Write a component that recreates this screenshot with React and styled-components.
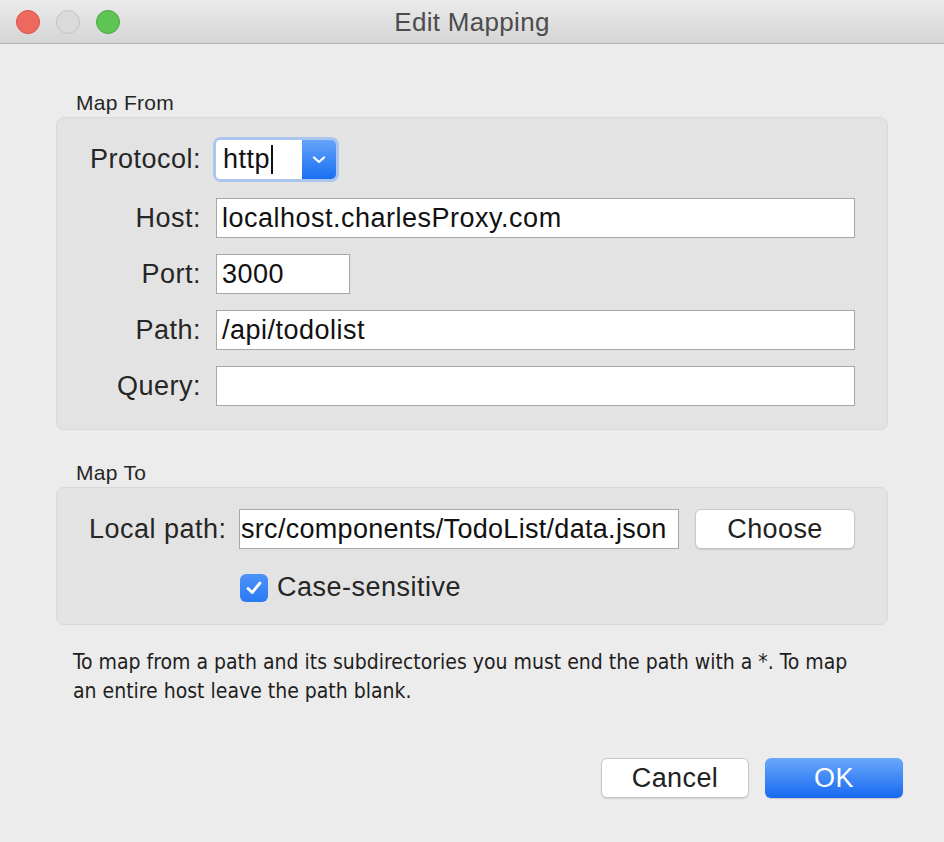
import React from "react";
import styled, { createGlobalStyle } from "styled-components";

const Global = createGlobalStyle`
  html, body { margin: 0; padding: 0; background: #ececec; }
  body { font-family: "Liberation Sans", Arial, sans-serif; color: #1e1e1e; }
  * { box-sizing: border-box; }
`;

const Window = styled.div`
  width: 944px;
  height: 842px;
  background: #ececec;
  display: flex;
  flex-direction: column;
  overflow: hidden;
`;

const TitleBar = styled.div`
  height: 44px;
  flex: none;
  display: grid;
  grid-template-columns: 1fr auto 1fr;
  align-items: center;
  background: linear-gradient(#ebebeb, #d5d5d5);
  border-bottom: 1px solid #b3b3b3;
`;

const Lights = styled.div`
  display: flex;
  gap: 16px;
  padding-left: 16px;
`;

const Light = styled.span`
  width: 24px;
  height: 24px;
  border-radius: 50%;
  background: ${(p) => p.$bg};
  border: 1px solid ${(p) => p.$bd};
`;

const Title = styled.div`
  font-size: 26px;
  letter-spacing: 0.3px;
  color: #4c4c4c;
  padding-top: 1px;
`;

const Body = styled.div`
  flex: 1;
  display: flex;
  flex-direction: column;
  padding: 47px 56px 0 56px;
`;

const SectionLabel = styled.div`
  font-size: 21px;
  letter-spacing: 0.3px;
  line-height: 24px;
  color: #262626;
  margin: 0 0 2px 20px;
  margin-top: ${(p) => p.$top || 0}px;
`;

const Box = styled.div`
  background: #e3e3e3;
  border: 1px solid #d9d9d9;
  border-radius: 8px;
  padding: ${(p) => p.$pad};
`;

const FormGrid = styled.div`
  display: grid;
  grid-template-columns: 124px 1fr;
  column-gap: 15px;
  row-gap: 16px;
  align-items: center;
`;

const Label = styled.label`
  font-size: 27px;
  letter-spacing: 0.5px;
  color: #262626;
  text-align: right;
  white-space: nowrap;
  width: ${(p) => p.$w || "auto"};
  flex: none;
`;

const TextField = styled.div`
  height: 40px;
  width: ${(p) => p.$w || "100%"};
  background: #fff;
  border: 1px solid #a8a8a8;
  font-size: 27px;
  letter-spacing: ${(p) => p.$ls || "0.5px"};
  line-height: 38px;
  padding-left: ${(p) => p.$pl || "5px"};
  color: #111;
  white-space: nowrap;
  overflow: hidden;
  flex: none;
`;

const ComboRing = styled.div`
  width: 126px;
  height: 45px;
  margin-left: -3px;
  padding: 3px;
  border-radius: 8px;
  background: #aac6ee;
  display: flex;
`;

const ComboInput = styled.div`
  flex: 1;
  background: #fff;
  border-radius: 4px 0 0 4px;
  font-size: 27px;
  letter-spacing: 0.5px;
  line-height: 39px;
  padding-left: 7px;
  color: #111;
  display: flex;
  align-items: center;
`;

const Caret = styled.span`
  width: 2px;
  height: 29px;
  background: #111;
  margin-left: 1px;
`;

const ComboButton = styled.div`
  width: 34px;
  border-radius: 0 5px 5px 0;
  background: linear-gradient(#63a4f9, #1b6ef1);
  display: flex;
  align-items: center;
  justify-content: center;
`;

const MapRow = styled.div`
  display: flex;
  align-items: center;
  gap: 16px;
`;

const CheckRow = styled.div`
  display: flex;
  align-items: center;
  gap: 9px;
  margin-top: 23px;
  padding-left: 151px;
`;

const CheckBox = styled.span`
  width: 28px;
  height: 28px;
  border-radius: 6px;
  background: linear-gradient(#4c93f8, #2b78f3);
  display: flex;
  align-items: center;
  justify-content: center;
  flex: none;
`;

const Button = styled.button`
  height: 40px;
  width: ${(p) => p.$w}px;
  border-radius: 6px;
  font-family: inherit;
  font-size: 27px;
  letter-spacing: 0.4px;
  padding: 0;
  cursor: default;
  color: ${(p) => (p.$primary ? "#fff" : "#222")};
  background: ${(p) => (p.$primary ? "linear-gradient(#69a8fa, #1769f1)" : "#fff")};
  border: ${(p) => (p.$primary ? "none" : "1px solid #c8c8c8")};
  box-shadow: ${(p) => (p.$primary ? "0 1px 1px rgba(0,0,0,0.15)" : "0 1px 1px rgba(0,0,0,0.12)")};
  flex: none;
`;

const Hint = styled.p`
  margin: 23px 0 0 17px;
  font-family: "Liberation Sans Narrow", "DejaVu Sans Condensed", "Liberation Sans", sans-serif;
  font-stretch: condensed;
  font-size: 21px;
  line-height: 29px;
  color: #1e1e1e;
  width: 800px;
`;

const Footer = styled.div`
  margin-top: auto;
  display: flex;
  justify-content: flex-end;
  gap: 16px;
  padding: 0 41px 44px 0;
`;

export default function App() {
  return (
    <Window>
      <Global />
      <TitleBar>
        <Lights>
          <Light $bg="#ef6a5e" $bd="#d8524a" />
          <Light $bg="#dadada" $bd="#c2c2c2" />
          <Light $bg="#5ec453" $bd="#49a83e" />
        </Lights>
        <Title>Edit Mapping</Title>
        <div />
      </TitleBar>
      <Body>
        <SectionLabel>Map From</SectionLabel>
        <Box $pad="19px 32px 23px 20px">
          <FormGrid>
            <Label>Protocol:</Label>
            <ComboRing>
              <ComboInput>
                http<Caret />
              </ComboInput>
              <ComboButton>
                <svg width="16" height="10" viewBox="0 0 16 10">
                  <path d="M3 2.5 L8 7 L13 2.5" fill="none" stroke="#fff" strokeWidth="2.2" strokeLinecap="round" strokeLinejoin="round" />
                </svg>
              </ComboButton>
            </ComboRing>
            <Label>Host:</Label>
            <TextField>localhost.charlesProxy.com</TextField>
            <Label>Port:</Label>
            <TextField $w="134px">3000</TextField>
            <Label>Path:</Label>
            <TextField>/api/todolist</TextField>
            <Label>Query:</Label>
            <TextField />
          </FormGrid>
        </Box>
        <SectionLabel $top={31}>Map To</SectionLabel>
        <Box $pad="21px 32px 21px 32px">
          <MapRow>
            <Label $w="134px">Local path:</Label>
            <TextField $w="440px" $pl="1px" $ls="0.3px">
              src/components/TodoList/data.json
            </TextField>
            <Button $w={160}>Choose</Button>
          </MapRow>
          <CheckRow>
            <CheckBox>
              <svg width="20" height="18" viewBox="0 0 20 18">
                <path d="M4 9.5 L8.2 13.5 L16 4" fill="none" stroke="#fff" strokeWidth="2.8" strokeLinecap="round" strokeLinejoin="round" />
              </svg>
            </CheckBox>
            <Label as="span">Case-sensitive</Label>
          </CheckRow>
        </Box>
        <Hint>
          To map from a path and its subdirectories you must end the path with a *. To map an entire host leave the path blank.
        </Hint>
      </Body>
      <Footer>
        <Button $w={148}>Cancel</Button>
        <Button $w={138} $primary>OK</Button>
      </Footer>
    </Window>
  );
}
